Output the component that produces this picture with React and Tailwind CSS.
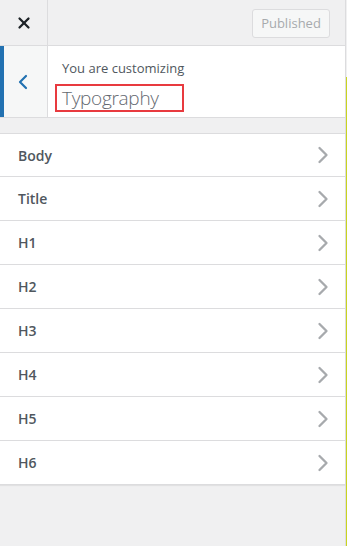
import React from 'react';
import { X, ChevronLeft, ChevronRight } from 'lucide-react';

const items = ['Body', 'Title', 'H1', 'H2', 'H3', 'H4', 'H5', 'H6'];

export default function App() {
  return (
    <div
      className="relative w-[347px] h-[546px] overflow-hidden bg-[#f0f0f1]"
      style={{ fontFamily: '"Open Sans", "Noto Sans", sans-serif' }}
    >
      <div className="w-[346px] h-full border-r border-[#dcdcde] flex flex-col">
        {/* top bar */}
        <div className="h-[46px] flex items-center border-b border-[#dcdcde] bg-[#f0f0f1] shrink-0">
          <div className="w-[48px] h-full flex items-center justify-center border-r border-[#dcdcde]">
            <X className="w-[18px] h-[18px] text-[#1d2327]" strokeWidth={3} />
          </div>
          <div className="flex-1" />
          <div className="mr-[15px] mt-[2px] h-[29px] w-[78px] flex items-center justify-center rounded-[3px] border border-[#dcdcde] bg-[#f6f7f7] text-[13px] text-[#a7aaad]">
            Published
          </div>
        </div>

        {/* section header */}
        <div className="h-[72px] flex bg-white border-b border-[#dcdcde] shrink-0">
          <div className="w-[4px] bg-[#2271b1]" />
          <div className="w-[44px] flex items-center justify-center pr-[5px] bg-[#f6f7f7] border-r border-[#dcdcde]">
            <ChevronLeft className="w-[24px] h-[24px] text-[#2271b1]" strokeWidth={2.2} />
          </div>
          <div className="flex flex-col pl-[14px] pt-[13px]">
            <span className="text-[13px] leading-[18px] text-[#50575e]">You are customizing</span>
            <div className="mt-[7px] -ml-[7px] w-[129px] h-[28px] border-2 border-[#e83a3f] flex items-center pl-[5px]">
              <span className="text-[19px] leading-none font-light text-[#646970] tracking-[-0.3px]">Typography</span>
            </div>
          </div>
        </div>

        {/* list */}
        <div className="mt-[15px] bg-white border-t border-[#dcdcde] shadow-[0_1px_1px_rgba(0,0,0,0.06)]">
          {items.map((item) => (
            <div
              key={item}
              className="h-[44px] first:h-[43px] flex items-center justify-between pl-[18px] pr-[8px] border-b border-[#dcdcde]"
            >
              <span className="text-[14px] font-semibold text-[#50575e]">{item}</span>
              <ChevronRight className="w-[28px] h-[28px] text-[#a7aaad]" strokeWidth={2} />
            </div>
          ))}
        </div>
      </div>
      {/* preview highlight edge */}
      <div className="absolute left-[346px] top-[77px] w-[1px] h-[469px] bg-[#c9d41f]" />
    </div>
  );
}
